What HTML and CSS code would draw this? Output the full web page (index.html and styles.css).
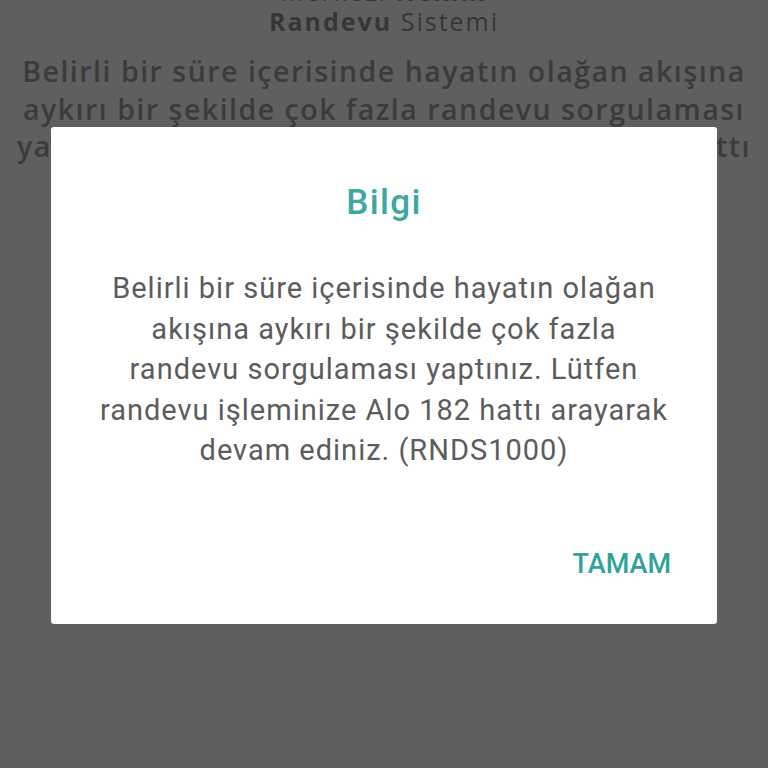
FILE: index.html
```html
<!DOCTYPE html>
<html lang="tr">
<head>
<meta charset="utf-8">
<link rel="stylesheet" href="styles.css">
</head>
<body>
<main class="page">
  <header class="brand">
    <div class="brand-line">Merkezi <b>Hekim</b></div>
    <div class="brand-line"><b>Randevu</b> Sistemi</div>
  </header>
  <p class="page-text">Belirli bir süre içerisinde hayatın olağan akışına aykırı bir şekilde çok fazla randevu sorgulaması yaptınız. Lütfen randevu işleminize Alo 182 hattı arayarak devam ediniz. (RNDS1000)</p>
</main>
<div class="overlay">
  <div class="dialog" role="dialog">
    <h2 class="dialog-title">Bilgi</h2>
    <p class="dialog-text">Belirli bir süre içerisinde hayatın olağan akışına aykırı bir şekilde çok fazla randevu sorgulaması yaptınız. Lütfen randevu işleminize Alo 182 hattı arayarak devam ediniz. (RNDS1000)</p>
    <div class="dialog-actions">
      <button class="dialog-btn">TAMAM</button>
    </div>
  </div>
</div>
</body>
</html>
```

FILE: styles.css
```css
html, body {
  margin: 0;
  padding: 0;
}
body {
  width: 768px;
  height: 768px;
  overflow: hidden;
  background: #5f5f5f;
  font-family: "Open Sans", "Noto Sans", sans-serif;
  color: #3b3b3b;
}
.page {
  display: flex;
  flex-direction: column;
  align-items: center;
  padding: 0 8px;
}
.brand {
  margin-top: -24px;
  text-align: center;
  font-size: 25px;
  line-height: 30px;
  letter-spacing: 2px;
  font-weight: 500;
  color: #363636;
}
.brand b {
  font-weight: 700;
}
.page-text {
  margin: 17px 0 0;
  text-align: center;
  font-size: 28.5px;
  line-height: 37.5px;
  font-weight: 600;
  letter-spacing: 1.5px;
  color: #3b3b3b;
}
.overlay {
  position: fixed;
  inset: 0;
  display: flex;
  align-items: flex-start;
  justify-content: center;
  padding-top: 127px;
}
.dialog {
  width: 666px;
  height: 497px;
  box-sizing: border-box;
  background: #ffffff;
  border-radius: 3px;
  display: flex;
  flex-direction: column;
  font-family: Roboto, "Noto Sans", sans-serif;
  padding: 52px 45px 0;
}
.dialog-title {
  margin: 0;
  text-align: center;
  font-size: 35px;
  line-height: 48px;
  font-weight: 500;
  letter-spacing: 1.4px;
  color: #3ea79f;
}
.dialog-text {
  margin: 41px 0 0;
  text-align: center;
  font-size: 29px;
  line-height: 40.5px;
  letter-spacing: 1px;
  color: #5c5c5c;
}
.dialog-actions {
  display: flex;
  justify-content: flex-end;
  padding-right: 1px;
  margin-top: 73px;
}
.dialog-btn {
  border: 0;
  background: none;
  padding: 0;
  font-family: Roboto, "Noto Sans", sans-serif;
  font-size: 27px;
  font-weight: 500;
  color: #2fa39a;
  line-height: 40px;
}
```
